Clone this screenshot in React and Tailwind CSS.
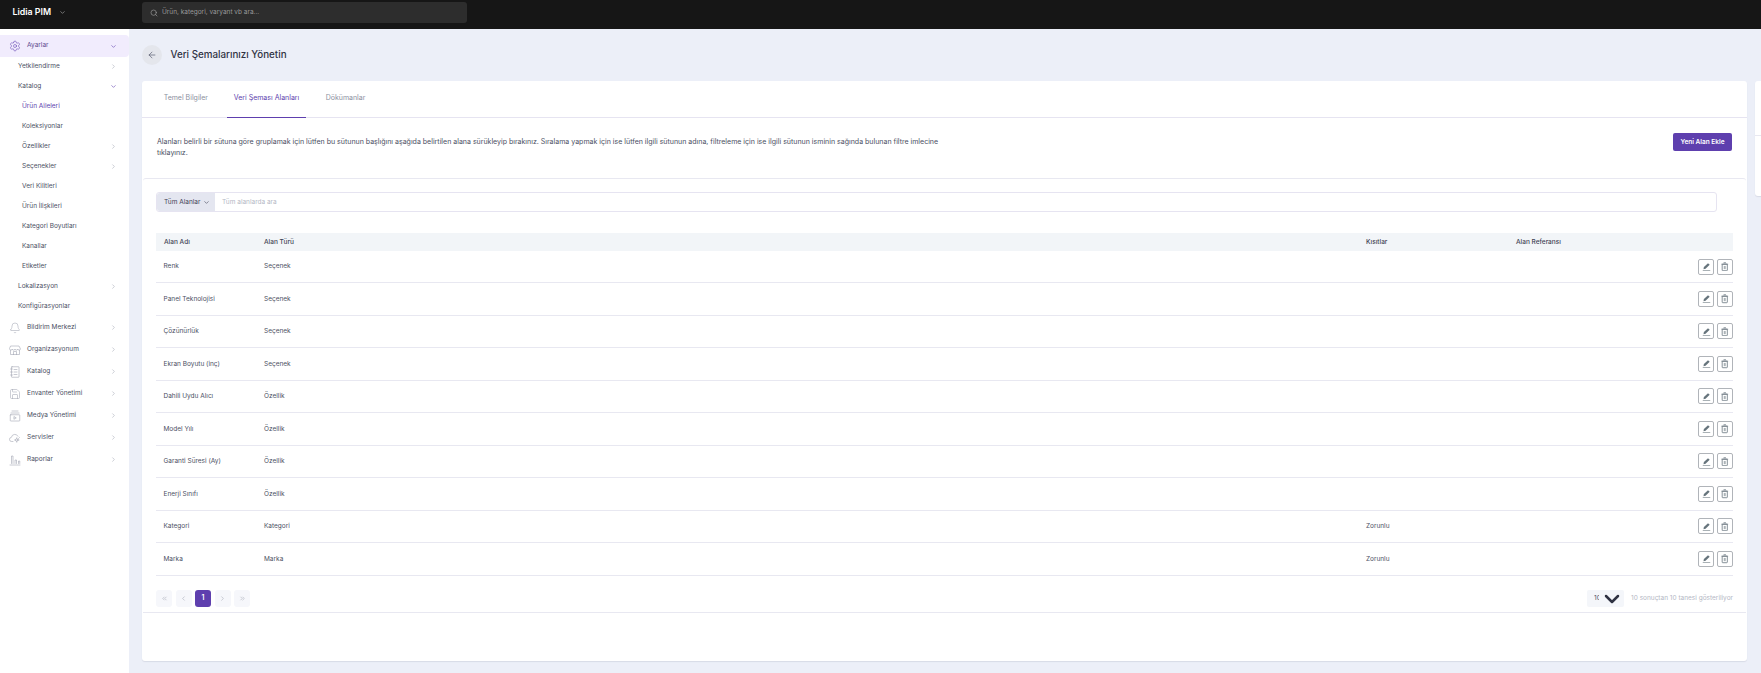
import React from "react";
import { ChevronDown, ChevronRight, ChevronLeft, ChevronsLeft, ChevronsRight, Search, ArrowLeft, Settings, Bell, Save } from "lucide-react";

const Caret = ({ open }) => open
  ? <ChevronDown className="w-[7px] h-[7px] text-[#5e3fae]" strokeWidth={2} />
  : <ChevronRight className="w-[7px] h-[7px] text-[#a8acb8]" strokeWidth={2} />;

const Svg = ({ children }) => (
  <svg viewBox="0 0 24 24" fill="none" stroke="currentColor" strokeWidth="1.1" strokeLinecap="round" strokeLinejoin="round" className="w-[12px] h-[12px] mr-[6px] text-[#9a9eac]">
    {children}
  </svg>
);

const StoreIcon = () => (
  <Svg>
    <path d="M4 4h16l3 6a2.8 2.8 0 0 1-5.5 0 2.8 2.8 0 0 1-5.5 0 2.8 2.8 0 0 1-5.5 0A2.8 2.8 0 0 1 1 10z" />
    <path d="M3 13v8h18v-8M9 21v-6h6v6" />
  </Svg>
);
const BookIcon = () => (
  <Svg>
    <rect x="5" y="1.5" width="15" height="21" rx="1" />
    <path d="M3 6h4M3 12h4M3 18h4M10 7h6M10 12h6M10 17h6" />
  </Svg>
);
const MediaIcon = () => (
  <Svg>
    <path d="M6 2h12M4 6h16" />
    <rect x="2.5" y="9.5" width="19" height="12.5" rx="1" />
    <path d="M10.5 13.5l4 2.3-4 2.3z" />
  </Svg>
);
const CloudIcon = () => (
  <Svg>
    <path d="M8 19H5.5a4.2 4.2 0 0 1-.6-8.4A7 7 0 0 1 18 8.5" />
    <circle cx="15.5" cy="16" r="2.5" />
    <path d="M15.5 11.5v2M15.5 18.5v2M20 16h-2M13 16h-2M21 11l-2 2" />
  </Svg>
);
const ReportIcon = () => (
  <Svg>
    <path d="M2 22h20" />
    <path d="M5 19V4h3v15M12 19V12h3v7M19 19v-5h2.5v5" />
  </Svg>
);
const BellIcon = () => <Bell className="w-[12px] h-[12px] mr-[6px] text-[#9a9eac]" strokeWidth={1} />;
const SaveIcon = () => <Save className="w-[12px] h-[12px] mr-[6px] text-[#9a9eac]" strokeWidth={1} />;

const EditIcon = () => (
  <svg viewBox="0 0 24 24" className="w-[9px] h-[9px] text-[#66747c]" fill="currentColor">
    <path d="M16 3l4.5 4.5L9.5 18l-5.5 1 1-5.5z" />
    <rect x="2" y="21.5" width="20" height="1.5" />
  </svg>
);
const TrashIcon = () => (
  <svg viewBox="0 0 24 24" className="w-[9.5px] h-[9.5px] text-[#66747c]" fill="none" stroke="currentColor" strokeWidth="2">
    <path d="M9 2h6M3.5 5.5h17" />
    <rect x="5.5" y="5.5" width="13" height="16.5" rx="1.5" />
    <rect x="9.5" y="10" width="5" height="8" fill="currentColor" fillOpacity="0.55" stroke="none" />
  </svg>
);

const sub = [
  ["Yetkilendirme", "pl-[18px]", "closed"],
  ["Katalog", "pl-[18px]", "open"],
  ["Ürün Aileleri", "pl-[22px]", null],
  ["Koleksiyonlar", "pl-[22px]", null],
  ["Özellikler", "pl-[22px]", "closed"],
  ["Seçenekler", "pl-[22px]", "closed"],
  ["Veri Kilitleri", "pl-[22px]", null],
  ["Ürün İlişkileri", "pl-[22px]", null],
  ["Kategori Boyutları", "pl-[22px]", null],
  ["Kanallar", "pl-[22px]", null],
  ["Etiketler", "pl-[22px]", null],
  ["Lokalizasyon", "pl-[18px]", "closed"],
  ["Konfigürasyonlar", "pl-[18px]", null],
];

const mainItems = [
  ["Bildirim Merkezi", BellIcon],
  ["Organizasyonum", StoreIcon],
  ["Katalog", BookIcon],
  ["Envanter Yönetimi", SaveIcon],
  ["Medya Yönetimi", MediaIcon],
  ["Servisler", CloudIcon],
  ["Raporlar", ReportIcon],
];

const rows = [
  ["Renk", "Seçenek", ""],
  ["Panel Teknolojisi", "Seçenek", ""],
  ["Çözünürlük", "Seçenek", ""],
  ["Ekran Boyutu (inç)", "Seçenek", ""],
  ["Dahili Uydu Alıcı", "Özellik", ""],
  ["Model Yılı", "Özellik", ""],
  ["Garanti Süresi (Ay)", "Özellik", ""],
  ["Enerji Sınıfı", "Özellik", ""],
  ["Kategori", "Kategori", "Zorunlu"],
  ["Marka", "Marka", "Zorunlu"],
];

function PageBtn({ children, active }) {
  return (
    <div className={`w-4 h-[17px] rounded-[3px] flex items-center justify-center ${active ? "bg-[#5e3fae] text-white font-semibold" : "bg-[#f6f7fb] text-[#a8acb8]"}`}>
      {children}
    </div>
  );
}

export default function App() {
  return (
    <div className="w-[1761px] h-[673px] overflow-hidden flex flex-col bg-[#eceff8] text-[#3f4254] text-[6.5px] leading-[10.5px] [font-family:Inter,sans-serif]">
      <header className="h-[29px] shrink-0 bg-[#161616] flex items-start">
        <div className="w-[142px] shrink-0 h-[24px] pl-[12.5px] flex items-center gap-[8px] text-white text-[8.8px] font-semibold">
          <span>Lidia PIM</span>
          <ChevronDown className="w-[7px] h-[7px] text-[#b5b5b5]" />
        </div>
        <div className="w-[325px] h-[21px] mt-[2px] rounded-[3px] bg-[#2d2d2d] flex items-center pl-[8px] gap-[4px] text-[#9a9a9a] text-[6.5px]">
          <Search className="w-[8px] h-[8px]" />
          <span>Ürün, kategori, varyant vb ara...</span>
        </div>
      </header>

      <div className="flex flex-1 min-h-0">
        <aside className="w-[129px] shrink-0 bg-white pt-[6px]">
          <div className="h-[22px] bg-[#f1ecfd] rounded-r-[4px] flex items-center pl-[9px] pr-[12px]">
            <Settings className="w-[12px] h-[12px] mr-[6px] text-[#5e3fae]" strokeWidth={1.1} />
            <span className="flex-1 -mt-[1px] text-[#5c4a8e]">Ayarlar</span>
            <Caret open />
          </div>
          <div className="-mt-[1px] mb-[0.5px]">
            {sub.map(([label, pl, caret], i) => (
              <div key={i} className={`h-[20px] flex items-center pr-[12px] ${pl} ${i === 2 ? "text-[#5e3fae]" : "text-[#4b4f63]"}`}>
                <span className="flex-1">{label}</span>
                {caret && <Caret open={caret === "open"} />}
              </div>
            ))}
          </div>
          {mainItems.map(([label, Icon], i) => (
            <div key={i} className="h-[22px] flex items-center pl-[9px] pr-[12px] text-[#4b4f63]">
              <Icon />
              <span className="flex-1 -mt-[1px]">{label}</span>
              <Caret />
            </div>
          ))}
        </aside>

        <main className="flex-1 min-w-0 pl-[13px] flex flex-col">
          <div className="h-[52px] shrink-0 flex items-center gap-[8.5px]">
            <div className="w-5 h-5 rounded-full bg-[#e4e6ec] flex items-center justify-center">
              <ArrowLeft className="w-[10px] h-[10px] text-[#4b4f63]" strokeWidth={1.5} />
            </div>
            <h1 className="mt-[1px] text-[9.8px] font-medium text-[#2f3242]">Veri Şemalarınızı Yönetin</h1>
          </div>

          <div className="flex gap-[8px] items-start">
            <section className="w-[1605px] h-[580px] shrink-0 bg-white rounded-[3px] shadow-[0_1px_1px_#d8dbe6] flex flex-col">
              <nav className="h-[37px] shrink-0 border-b border-[#e6e4f1] flex text-[7px] text-[#8b8fa0] pl-[21.7px]">
                <div className="w-[63.3px] pt-[12px]">Temel Bilgiler</div>
                <div className="w-[79px] h-[37px] pt-[12px] pl-[6.7px] border-b border-[#5e3fae] text-[#5e3fae]">Veri Şeması Alanları</div>
                <div className="pt-[12px] pl-[19.7px]">Dökümanlar</div>
              </nav>

              <div className="h-[60px] shrink-0 pl-[15px] pr-[15px] flex items-start justify-between">
                <p className="w-[790px] mt-[19px] text-[7.02px] text-[#4b4f63]">
                  Alanları belirli bir sütuna göre gruplamak için lütfen bu sütunun başlığını aşağıda belirtilen alana sürükleyip bırakınız. Sıralama yapmak için ise lütfen ilgili sütunun adına, filtreleme için ise ilgili sütunun isminin sağında bulunan filtre imlecine tıklayınız.
                </p>
                <button className="w-[59px] h-[18px] mt-[15px] bg-[#5e3fae] text-white rounded-[2px] text-[6.5px] font-semibold">Yeni Alan Ekle</button>
              </div>

              <div className="mx-[1px] h-[435px] shrink-0 border-y border-[#e8e8f1] rounded-t-[3px] pl-[13px] pr-[13px] pt-[13px]">
                <div className="w-[1561px] h-[20px] flex rounded-[3px] border border-[#e6e4f1]">
                  <div className="w-[58px] shrink-0 bg-[#e4e6f0] rounded-l-[3px] flex items-center pl-[7px] gap-[2.5px] whitespace-nowrap text-[#3f4254]">
                    Tüm Alanlar <ChevronDown className="w-[7px] h-[7px]" />
                  </div>
                  <div className="flex items-center pl-[7px] text-[#b4b7c4]">Tüm alanlarda ara</div>
                </div>

                <div className="w-[1577px] mt-[21px]">
                  <div className="h-[18px] bg-[#f2f5f8] flex items-center font-medium text-[#3f4254]">
                    <span className="w-[100px] pl-[8px]">Alan Adı</span>
                    <span className="w-[1102px] pl-[8px]">Alan Türü</span>
                    <span className="w-[150px] pl-[8px]">Kısıtlar</span>
                    <span className="pl-[8px]">Alan Referansı</span>
                  </div>
                  {rows.map(([a, b, c], i) => (
                    <div key={i} className={`${i === 0 ? "h-[32px]" : "h-[32.5px]"} border-b border-[#e8e8f1] flex items-center text-[#4b4f63]`}>
                      <span className="w-[100px] pl-[7.5px]">{a}</span>
                      <span className="w-[1102px] pl-[8px]">{b}</span>
                      <span className="w-[293px] pl-[8px]">{c}</span>
                      <div className="ml-auto flex gap-[3px]">
                        <div className="w-4 h-4 rounded-[2px] border border-[#b0b4b9] flex items-center justify-center">
                          <EditIcon />
                        </div>
                        <div className="w-4 h-4 rounded-[2px] border border-[#b0b4b9] flex items-center justify-center">
                          <TrashIcon />
                        </div>
                      </div>
                    </div>
                  ))}

                  <div className="mt-[14.5px] flex items-center">
                    <div className="flex gap-[3.5px] text-[7px]">
                      <PageBtn><ChevronsLeft className="w-[7px] h-[7px]" /></PageBtn>
                      <PageBtn><ChevronLeft className="w-[7px] h-[7px]" /></PageBtn>
                      <PageBtn active>1</PageBtn>
                      <PageBtn><ChevronRight className="w-[7px] h-[7px]" /></PageBtn>
                      <PageBtn><ChevronsRight className="w-[7px] h-[7px]" /></PageBtn>
                    </div>
                    <div className="ml-auto w-[37px] h-[17px] rounded-[2px] bg-[#f4f6fa] flex items-center pl-[7px] overflow-hidden text-[#4b4f63]">
                      <span className="w-[5px] shrink-0 overflow-hidden">10</span>
                      <ChevronDown className="w-[24px] h-[24px] shrink-0 ml-[1px] text-[#2f3242]" strokeWidth={2.5} />
                    </div>
                    <span className="ml-[7px] text-[#b4b7c4]">10 sonuçtan 10 tanesi gösteriliyor</span>
                  </div>
                </div>
              </div>
            </section>

            <aside className="w-[20px] h-[115px] shrink-0 bg-white rounded-l-[3px] shadow-[0_1px_1px_#d8dbe6] flex flex-col">
              <div className="h-[55px] border-b border-[#e8e8f1]" />
            </aside>
          </div>
        </main>
      </div>
    </div>
  );
}
